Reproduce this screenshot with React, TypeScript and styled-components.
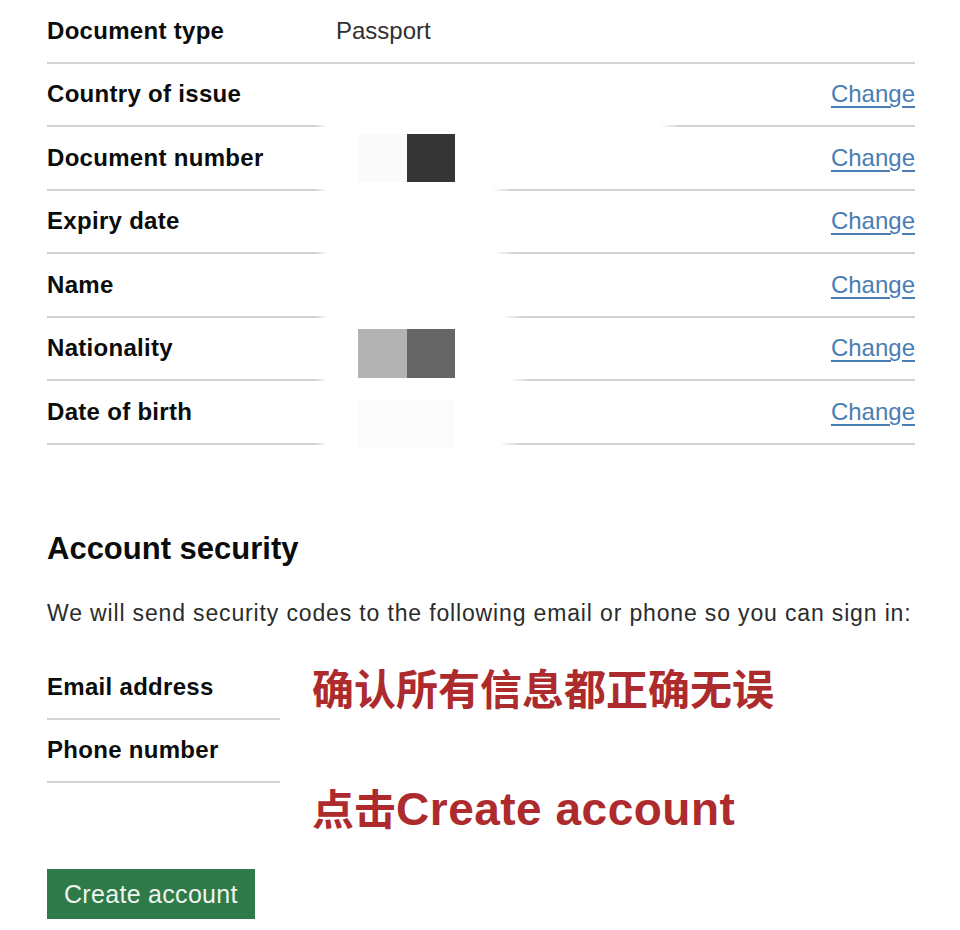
import React from "react";
import styled, { createGlobalStyle } from "styled-components";

const GlobalStyle = createGlobalStyle`
  html, body {
    margin: 0;
    padding: 0;
    background: #ffffff;
  }
  body {
    font-family: "Liberation Sans", Arial, sans-serif;
    color: #0b0c0c;
  }
`;

const Page = styled.main`
  width: 868px;
  padding: 0 0 0 47px;
`;

const SummaryList = styled.dl`
  margin: 0;
`;

const Row = styled.div`
  display: grid;
  grid-template-columns: 289px 1fr auto;
  align-items: center;
  height: 61.5px;
`;

const Key = styled.dt`
  margin: 0;
  font-size: 24px;
  font-weight: 700;
  line-height: 30px;
  letter-spacing: 0.3px;
  color: #0b0c0c;
  white-space: nowrap;
`;

const Value = styled.dd`
  margin: 0;
  font-size: 24px;
  line-height: 30px;
  color: #2f3030;
  display: flex;
  align-items: center;
`;

const Action = styled.dd`
  margin: 0;
  font-size: 24px;
  line-height: 30px;
`;

const ChangeLink = styled.a`
  color: #4a7db4;
  text-decoration: underline;
  text-decoration-thickness: 2px;
  text-underline-offset: 4px;
  cursor: pointer;
`;

const Rule = styled.div<{ $gapFrom?: number; $gapTo?: number }>`
  height: 2px;
  background: ${(p) =>
    p.$gapFrom !== undefined && p.$gapTo !== undefined
      ? `linear-gradient(to right, #d2d2d2 0, #d2d2d2 ${p.$gapFrom - 12}px, rgba(210,210,210,0) ${p.$gapFrom}px, rgba(210,210,210,0) ${p.$gapTo}px, #d2d2d2 ${p.$gapTo + 20}px, #d2d2d2 100%)`
      : "#d2d2d2"};
`;

const Redaction = styled.div<{ $offset: number; $shift?: number }>`
  display: flex;
  margin-left: ${(p) => p.$offset}px;
  transform: translateY(${(p) => p.$shift ?? 0}px);
`;

const Pixel = styled.span<{ $tone: string }>`
  display: block;
  width: 48.5px;
  height: 48.5px;
  background: ${(p) => p.$tone};
`;

const Heading = styled.h2`
  margin: 85px 0 0;
  font-size: 31px;
  line-height: 38px;
  font-weight: 700;
  color: #0b0c0c;
`;

const Lead = styled.p`
  margin: 31px 0 0;
  font-size: 23px;
  line-height: 28px;
  letter-spacing: 0.85px;
  color: #2b2c2c;
  white-space: nowrap;
`;

const Contact = styled.section`
  display: grid;
  grid-template-columns: 233px 1fr;
  column-gap: 32px;
  margin-top: 30px;
`;

const ContactRow = styled.div`
  display: flex;
  align-items: center;
  height: 61px;
`;

const Notes = styled.div`
  display: flex;
  flex-direction: column;
  gap: 68px;
  padding-top: 9px;
`;

const Note = styled.div`
  font-family: "Liberation Sans", "Noto Sans CJK SC", sans-serif;
  font-size: 42px;
  line-height: 50px;
  font-weight: 700;
  color: #ad2a2d;
  white-space: nowrap;
`;

const NoteLatin = styled.span`
  font-size: 46px;
  letter-spacing: 0.5px;
`;

const Button = styled.button`
  margin-top: 33px;
  display: inline-block;
  padding: 9px 17px 8px;
  font-family: "Liberation Sans", Arial, sans-serif;
  font-size: 25px;
  line-height: 33px;
  letter-spacing: 0.3px;
  color: #eef3ee;
  background: #2e7a49;
  border: 0;
  border-radius: 0;
  box-shadow: 0 3px 0 #1b4a2b;
  cursor: pointer;
`;

const rows: {
  key: string;
  value?: string;
  pixels?: string[];
  offset?: number;
  shift?: number;
  change: boolean;
  gap?: [number, number];
}[] = [
  { key: "Document type", value: "Passport", change: false },
  { key: "Country of issue", change: true, gap: [280, 613] },
  { key: "Document number", pixels: ["#fafafa", "#353535"], offset: 22, change: true, gap: [280, 445] },
  { key: "Expiry date", change: true, gap: [280, 448] },
  { key: "Name", change: true, gap: [280, 455] },
  { key: "Nationality", pixels: ["#b3b3b3", "#666666"], offset: 22, shift: 5, change: true, gap: [280, 463] },
  { key: "Date of birth", pixels: ["#fbfbfb", "#fbfbfb"], offset: 22, shift: 12, change: true, gap: [280, 453] },
];

export default function App() {
  return (
    <>
      <GlobalStyle />
      <Page>
        <SummaryList>
          {rows.map((r) => (
            <React.Fragment key={r.key}>
              <Row>
                <Key>{r.key}</Key>
                <Value>
                  {r.value}
                  {r.pixels && (
                    <Redaction $offset={r.offset ?? 0} $shift={r.shift}>
                      {r.pixels.map((tone, i) => (
                        <Pixel key={i} $tone={tone} />
                      ))}
                    </Redaction>
                  )}
                </Value>
                <Action>{r.change && <ChangeLink>Change</ChangeLink>}</Action>
              </Row>
              <Rule $gapFrom={r.gap?.[0]} $gapTo={r.gap?.[1]} />
            </React.Fragment>
          ))}
        </SummaryList>

        <Heading>Account security</Heading>
        <Lead>We will send security codes to the following email or phone so you can sign in:</Lead>

        <Contact>
          <SummaryList>
            <ContactRow>
              <Key>Email address</Key>
            </ContactRow>
            <Rule />
            <ContactRow>
              <Key>Phone number</Key>
            </ContactRow>
            <Rule />
          </SummaryList>
          <Notes>
            <Note>确认所有信息都正确无误</Note>
            <Note>
              点击<NoteLatin>Create account</NoteLatin>
            </Note>
          </Notes>
        </Contact>

        <Button>Create account</Button>
      </Page>
    </>
  );
}
